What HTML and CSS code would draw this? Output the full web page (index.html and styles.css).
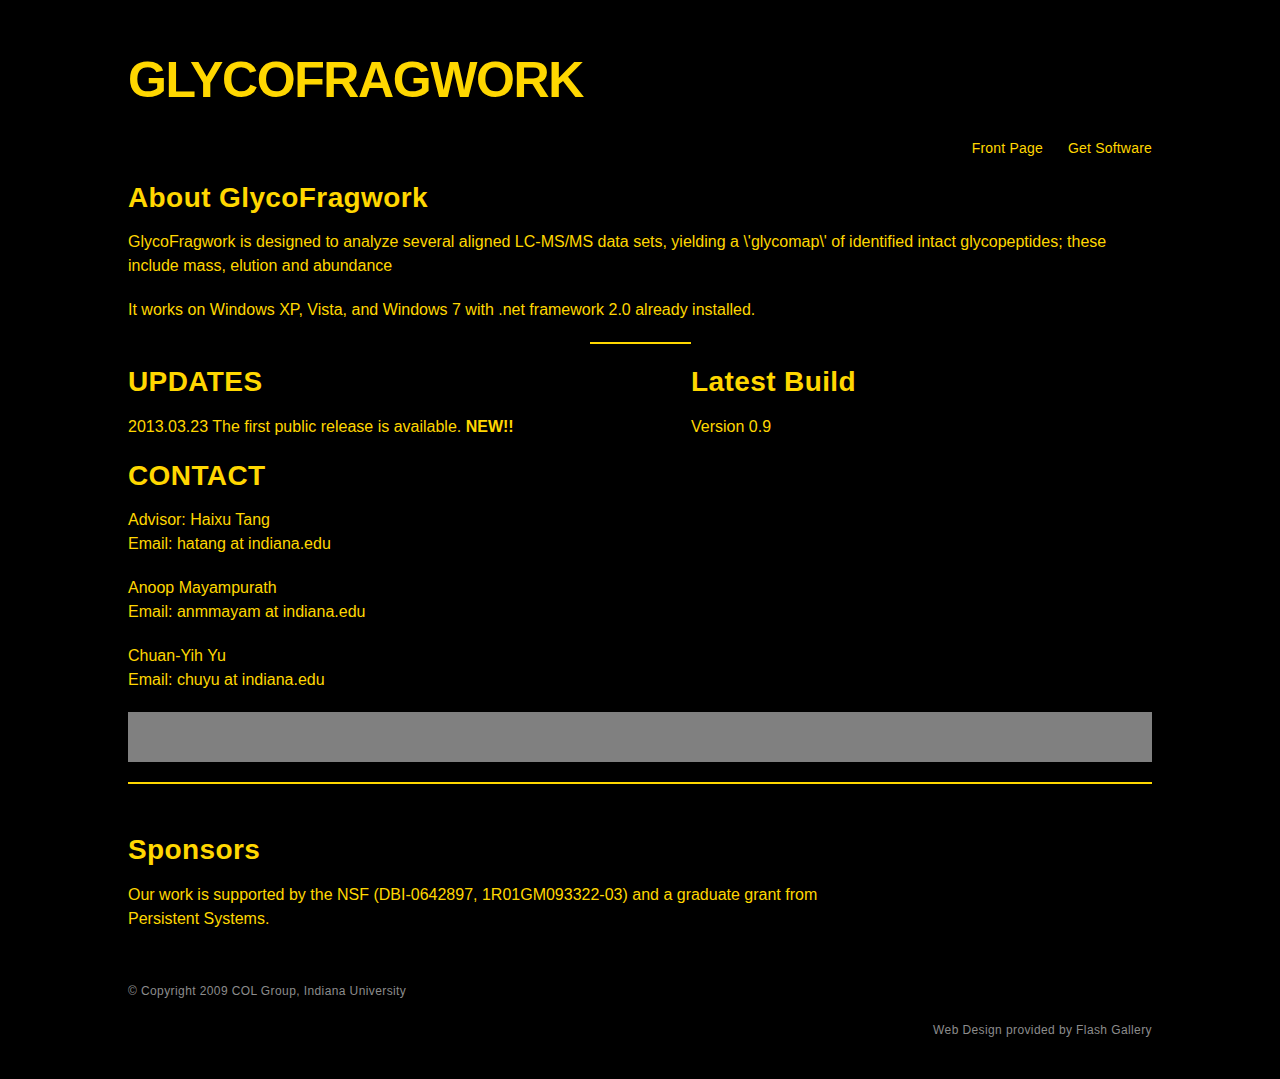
FILE: index.html
```html
<!DOCTYPE html>
<html>
<head>
<meta charset="utf-8">
<title>GlycoFragwork</title>
<link rel="stylesheet" href="styles.css">
</head>
<body>
<div class="page">
  <header class="header">
    <h1 class="logo">GLYCOFRAGWORK</h1>
    <nav class="nav">
      <a href="#">Front Page</a>
      <a href="#">Get Software</a>
    </nav>
  </header>

  <section class="about">
    <h2>About GlycoFragwork</h2>
    <p>GlycoFragwork is designed to analyze several aligned LC-MS/MS data sets, yielding a \'glycomap\' of identified intact glycopeptides; these include mass, elution and abundance</p>
    <p>It works on Windows XP, Vista, and Windows 7 with .net framework 2.0 already installed.</p>
  </section>

  <div class="short-rule"></div>

  <div class="columns">
    <section class="col-left">
      <h2>UPDATES</h2>
      <p>2013.03.23 The first public release is available. <strong>NEW!!</strong></p>
    </section>
    <section class="col-right">
      <h2>Latest Build</h2>
      <p>Version 0.9</p>
    </section>
  </div>

  <section class="contact">
    <h2>CONTACT</h2>
    <p>Advisor: Haixu Tang<br>Email: hatang at indiana.edu</p>
    <p>Anoop Mayampurath<br>Email: anmmayam at indiana.edu</p>
    <p>Chuan-Yih Yu<br>Email: chuyu at indiana.edu</p>
  </section>

  <div class="grey-box"></div>
  <div class="full-rule"></div>

  <section class="sponsors">
    <h2>Sponsors</h2>
    <p>Our work is supported by the NSF (DBI-0642897, 1R01GM093322-03) and a graduate grant from Persistent Systems.</p>
  </section>

  <footer class="footer">
    <p class="copyright">© Copyright 2009 COL Group, Indiana University</p>
    <p class="credit">Web Design provided by Flash Gallery</p>
  </footer>
</div>
</body>
</html>
```

FILE: styles.css
```css
html, body {
  margin: 0;
  padding: 0;
  background: #000;
}
body {
  font-family: "Liberation Sans", Arial, sans-serif;
  color: #ffd700;
}
.page {
  width: 1024px;
  margin: 0 auto;
  padding-top: 50px;
}
.logo {
  margin: 0;
  font-size: 50px;
  line-height: 60px;
  font-weight: bold;
  letter-spacing: -1.4px;
}
.nav {
  display: flex;
  justify-content: flex-end;
  gap: 25px;
  margin-top: 30px;
  font-size: 14px;
  line-height: 16px;
  letter-spacing: 0.2px;
}
.nav a {
  color: #ffd700;
  text-decoration: none;
}
h2 {
  margin: 0;
  font-size: 28px;
  line-height: 34px;
  font-weight: bold;
  letter-spacing: 0.4px;
}
p {
  margin: 0;
  font-size: 16px;
  line-height: 24px;
}
.about {
  margin-top: 25px;
}
.about h2 {
  margin-bottom: 15px;
}
.about p + p {
  margin-top: 20px;
}
.short-rule {
  width: 101px;
  height: 2px;
  background: #ffd700;
  margin: 20px auto 0;
}
.columns {
  display: flex;
  margin-top: 21px;
}
.col-left {
  width: 563px;
}
.col-right {
  flex: 1;
}
.columns h2 {
  margin-bottom: 16px;
}
.contact {
  margin-top: 20px;
}
.contact h2 {
  margin-bottom: 15px;
}
.contact p + p {
  margin-top: 20px;
}
.grey-box {
  height: 50px;
  background: #808080;
  margin-top: 20px;
}
.full-rule {
  height: 2px;
  background: #ffd700;
  margin-top: 20px;
}
.sponsors {
  margin-top: 49px;
  width: 720px;
}
.sponsors h2 {
  margin-bottom: 16px;
}
.footer {
  margin-top: 52px;
  padding-bottom: 40px;
  color: #8c8c8c;
}
.footer p {
  font-size: 12px;
  line-height: 16px;
  letter-spacing: 0.4px;
}
.credit {
  text-align: right;
  margin-top: 23px !important;
}
```
